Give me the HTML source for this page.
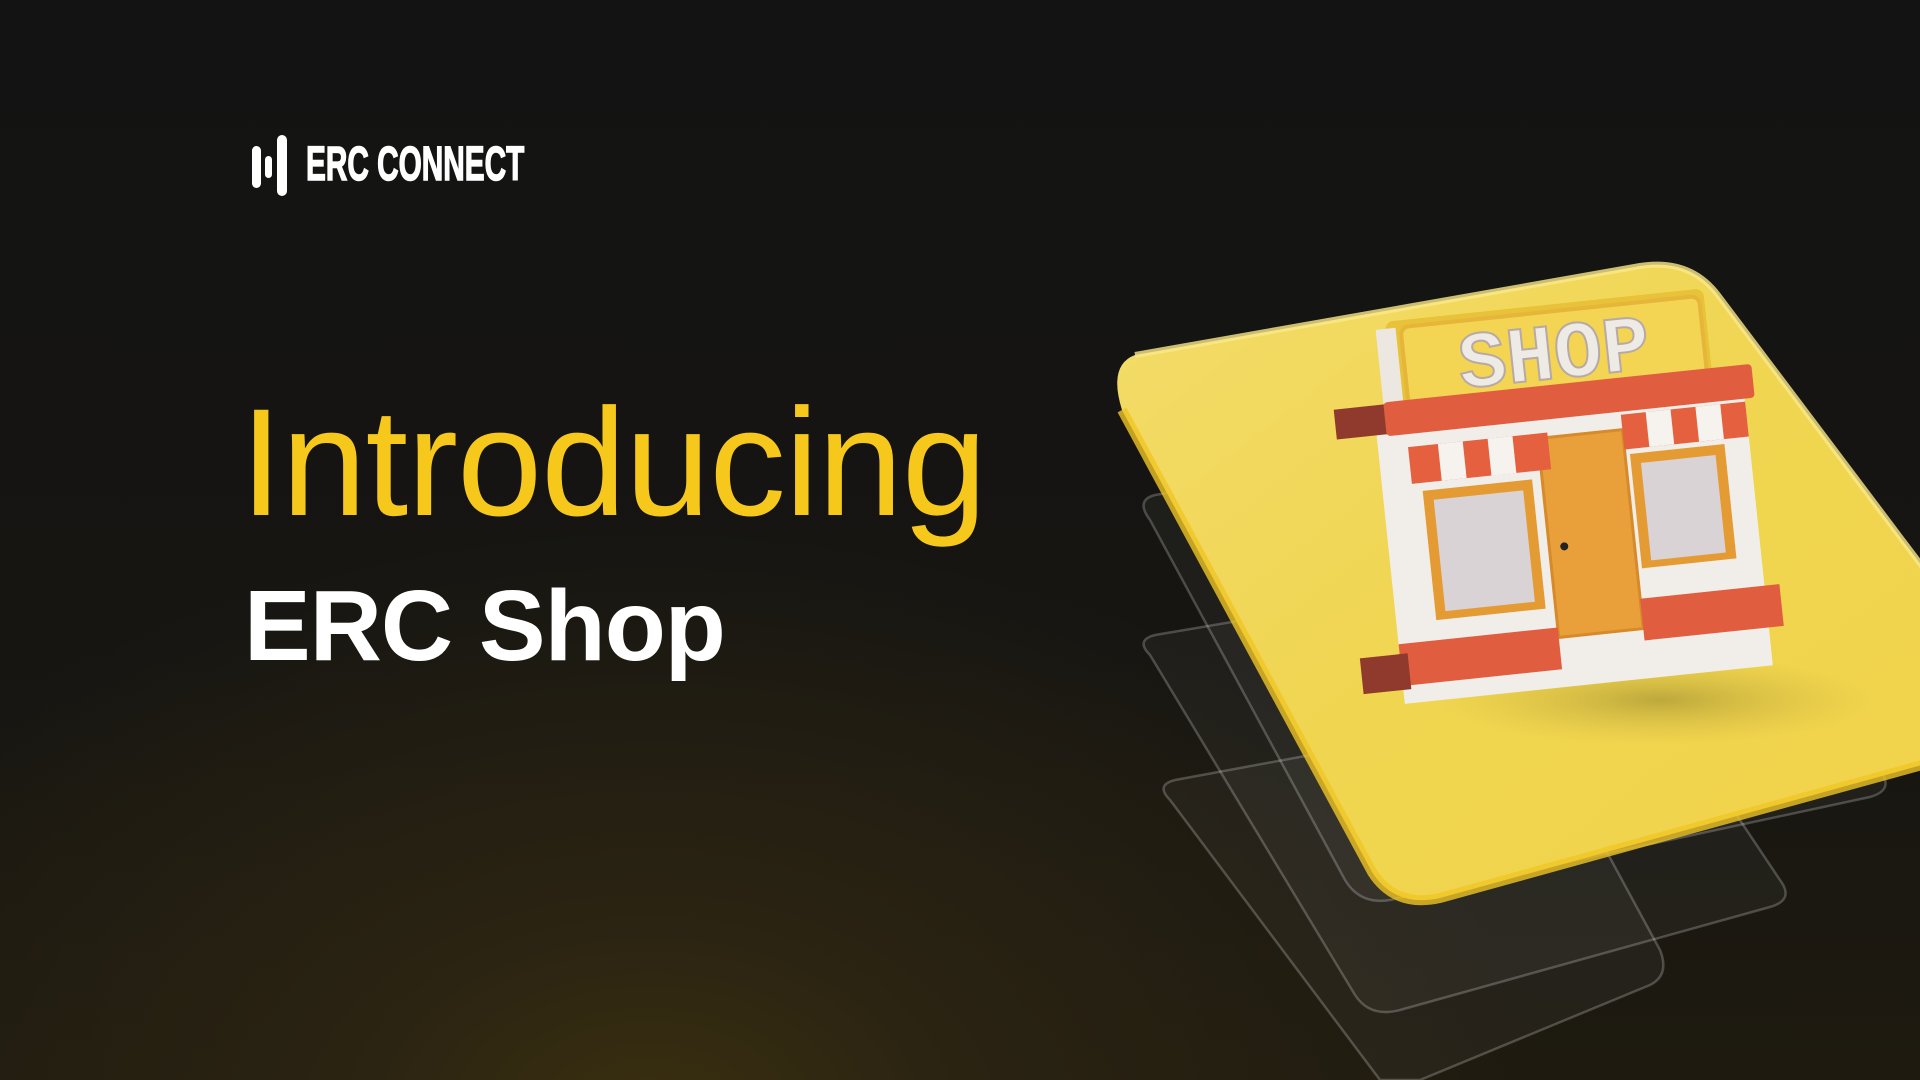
<!DOCTYPE html>
<html><head><meta charset="utf-8"><style>
html,body{margin:0;padding:0}
body{width:1920px;height:1080px;overflow:hidden;position:relative;font-family:"Liberation Sans",sans-serif;
background:radial-gradient(ellipse 900px 600px at 650px 1120px,#3a2f10 0%,#2a2312 35%,rgba(20,20,20,0) 100%),linear-gradient(180deg,#131313 0%,#161512 60%,#1e1a10 100%);}
.t1{position:absolute;left:240px;top:386px;font-size:153px;color:#f7c81c;letter-spacing:-1px;line-height:1}
.t2{position:absolute;left:244px;top:576px;font-size:100px;font-weight:bold;color:#fff;letter-spacing:-1px;line-height:1}
.logo{position:absolute;left:306px;top:141px;font-size:48px;font-weight:bold;color:#fff;transform:scaleX(.62);transform-origin:left top;line-height:1;-webkit-text-stroke:1.5px #fff}
</style></head><body>
<svg width="1920" height="1080" style="position:absolute;left:0;top:0">
<defs>
<linearGradient id="y" x1="0" y1="0" x2="1" y2="1"><stop offset="0" stop-color="#f3dc6a"/><stop offset=".5" stop-color="#f0d550"/><stop offset="1" stop-color="#f2d44a"/></linearGradient>
<radialGradient id="sh" cx=".5" cy=".5" r=".5"><stop offset="0" stop-color="#9a8a30" stop-opacity=".6"/><stop offset="1" stop-color="#c9b040" stop-opacity="0"/></radialGradient>
</defs>
<rect x="252" y="146" width="9" height="42" rx="4.5" fill="#fff"/>
<rect x="265" y="156" width="7" height="22" rx="3.5" fill="#fff"/>
<rect x="277" y="135" width="10" height="61" rx="5" fill="#fff"/>
<g fill="rgba(255,255,255,0.04)" stroke="rgba(255,255,255,0.22)" stroke-width="2.5">
<path d="M1150,520 Q1135,500 1155,495 L1540,430 Q1570,426 1585,448 L1880,770 Q1895,790 1870,797 L1390,900 Q1360,905 1345,880 Z"/>
<path d="M1150,655 Q1135,640 1155,635 L1540,570 Q1570,566 1585,588 L1780,880 Q1795,900 1770,907 L1400,1010 Q1370,1018 1355,995 Z"/>
<path d="M1170,800 Q1155,785 1175,780 L1500,720 Q1530,716 1545,738 L1660,950 Q1670,975 1650,985 L1420,1080 L1380,1080 Z"/>
</g>
<path d="M1135,355 L1640,266 Q1690,258 1718,295 L1940,590 L1940,760 L1440,898 Q1395,908 1372,872 L1122,410 Q1108,365 1135,355 Z" fill="url(#y)"/>
<path d="M1135,355 L1640,266 Q1690,258 1718,295 L1940,590" fill="none" stroke="#fae98a" stroke-width="6" opacity=".8"/>
<path d="M1122,410 L1372,872 Q1395,908 1440,898 L1940,760" fill="none" stroke="#f0c625" stroke-width="10" opacity=".8"/>
<ellipse cx="1660" cy="700" rx="220" ry="45" fill="url(#sh)"/>
<g transform="translate(1345,305) rotate(-6 230 200)">
<rect x="60" y="-2" width="320" height="90" rx="8" fill="#e8c238"/>
<rect x="50" y="5" width="20" height="80" fill="#ece7e0"/>
<rect x="75" y="5" width="300" height="80" rx="8" fill="#f3d453" stroke="#e5b63a" stroke-width="4"/>
<text x="225" y="72" text-anchor="middle" font-family="Liberation Mono,monospace" font-weight="bold" font-size="80" fill="#eeeae6" stroke="#b7a9a5" stroke-width="2">SHOP</text>
<rect x="40" y="90" width="370" height="290" fill="#f1eeea"/>
<rect x="0" y="80" width="60" height="30" fill="#8f3a2c"/>
<rect x="50" y="78" width="370" height="34" rx="4" fill="#e15d3f"/>
<rect x="80" y="170" width="110" height="130" fill="#e49b34"/>
<rect x="90" y="180" width="90" height="112" fill="#d9d3d6"/>
<rect x="290" y="155" width="95" height="115" fill="#e49b34"/>
<rect x="300" y="165" width="75" height="98" fill="#d9d3d6"/>
<rect x="200" y="130" width="85" height="200" fill="#e9a03a" stroke="#d68a2a" stroke-width="3"/>
<circle cx="215" cy="240" r="4" fill="#222"/>
<path d="M70,125 L210,125 L210,162 L70,162 Z" fill="#e5603f"/>
<path d="M100,125 L125,125 L125,162 L100,162 Z M150,125 L175,125 L175,162 L150,162 Z" fill="#f6f3ef"/>
<path d="M285,115 L410,115 L410,150 L285,150 Z" fill="#e5603f"/>
<path d="M310,115 L335,115 L335,150 L310,150 Z M360,115 L385,115 L385,150 L360,150 Z" fill="#f6f3ef"/>
<rect x="40" y="320" width="160" height="42" fill="#e15d3f"/>
<rect x="0" y="330" width="48" height="36" fill="#8f3a2c"/>
<rect x="285" y="300" width="140" height="42" fill="#e15d3f"/>
</g>
</svg>
<div class="logo">ERC CONNECT</div>
<div class="t1">Introducing</div>
<div class="t2">ERC Shop</div>
</body></html>
